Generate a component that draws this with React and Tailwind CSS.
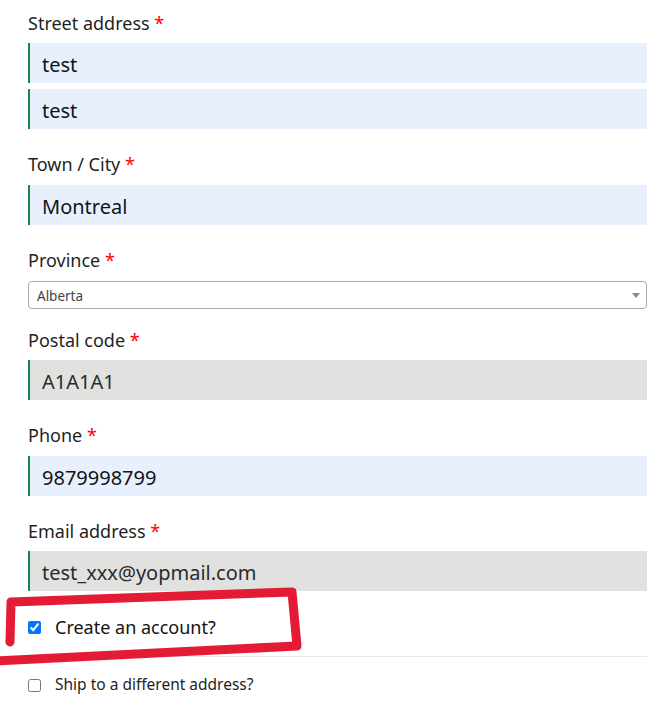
const font = { fontFamily: '"Noto Sans", "Open Sans", sans-serif' };

function Label({ children, className = '' }) {
  return (
    <label className={`block h-[26px] text-[18px] leading-[26px] text-[#1f1f1f] ${className}`}>
      {children} <span className="text-[#f00]">*</span>
    </label>
  );
}

function Field({ value, muted = false, className = '' }) {
  return (
    <div
      className={`flex h-10 items-center border-l-2 border-[#16855a] pl-3 pt-[3px] text-[20px] ${
        muted ? 'bg-[#e1e1df] text-[#2b2b2b]' : 'bg-[#e8f0fe] text-[#141414]'
      } ${className}`}
    >
      {value}
    </div>
  );
}

export default function App() {
  return (
    <div className="relative min-h-[725px] bg-white pl-[28px] pr-[23px] pt-[10px]" style={font}>
      <Label className="mb-[7px]">Street address</Label>
      <Field value="test" />
      <Field value="test" className="mt-[6px]" />

      <Label className="mt-[22px] mb-[8px]">Town / City</Label>
      <Field value="Montreal" />

      <Label className="mt-[22px] mb-[8px]">Province</Label>
      <div className="relative flex h-[28px] items-center rounded-[4px] border border-[#aaa] pl-2 pt-[3px] text-[13.5px] text-[#444]">
        Alberta
        <span className="absolute right-[6px] top-[11px] h-0 w-0 border-x-[4px] border-t-[5px] border-x-transparent border-t-[#888]" />
      </div>

      <Label className="mt-[18px] mb-[7px]">Postal code</Label>
      <Field value="A1A1A1" muted />

      <Label className="mt-[22px] mb-[8px]">Phone</Label>
      <Field value="9879998799" />

      <Label className="mt-[22px] mb-[7px]">Email address</Label>
      <Field value="test_xxx@yopmail.com" muted />

      <div className="mt-[23px] flex h-[26px] items-center gap-[14px] text-[18px] text-[#141414]">
        <input type="checkbox" defaultChecked className="m-0 h-[13px] w-[13px]" />
        <span>Create an account?</span>
      </div>

      <div className="mt-[16px] h-px bg-[#e8e8e8]" />

      <div className="mt-[16px] flex h-6 items-center gap-[14px] text-[15.5px] text-[#1f1f1f]">
        <input type="checkbox" className="m-0 h-[13px] w-[13px]" />
        <span>Ship to a different address?</span>
      </div>

      {/* hand-drawn highlight over the account checkbox */}
      <svg className="pointer-events-none absolute left-0 top-0" width="670" height="725" viewBox="0 0 670 725">
        <path
          d="M10 642 L11 602 L292 592 L297 646 L-6 661"
          fill="none"
          stroke="#e31b34"
          strokeWidth="9"
          strokeLinejoin="round"
          strokeLinecap="round"
        />
      </svg>
    </div>
  );
}
